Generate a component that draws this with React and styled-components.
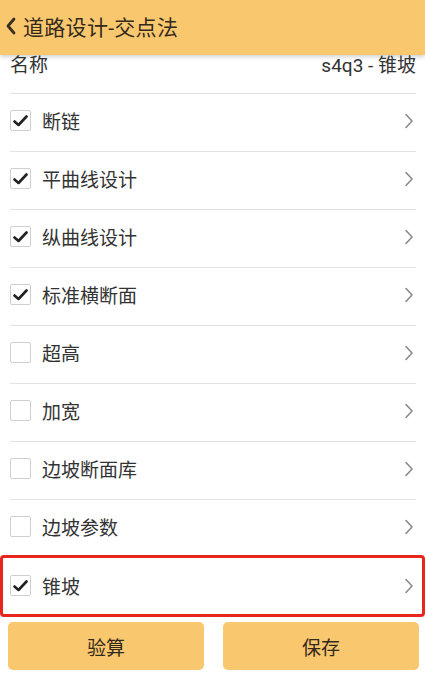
import React from "react";
import styled, { createGlobalStyle } from "styled-components";

const GlobalStyle = createGlobalStyle`
	html, body {
		margin: 0;
		padding: 0;
		background: #fff;
	}
	body {
		font-family: Roboto, "Noto Sans CJK SC", sans-serif;
		color: #333;
	}
`;

const items = [
	{ label: "断链", checked: true },
	{ label: "平曲线设计", checked: true },
	{ label: "纵曲线设计", checked: true },
	{ label: "标准横断面", checked: true },
	{ label: "超高", checked: false },
	{ label: "加宽", checked: false },
	{ label: "边坡断面库", checked: false },
	{ label: "边坡参数", checked: false },
	{ label: "锥坡", checked: true, highlight: true },
];

const BackIcon = () => (
	<svg width="12" height="18" viewBox="0 0 12 18">
		<path d="M9 2 L3 9 L9 16" fill="none" stroke="#3a2f20" strokeWidth="2.8" strokeLinecap="round" strokeLinejoin="round" />
	</svg>
);

const Chevron = () => (
	<svg width="10" height="16" viewBox="0 0 10 16">
		<path d="M2 1.5 L8 8 L2 14.5" fill="none" stroke="#8a8a8a" strokeWidth="1.6" strokeLinecap="round" strokeLinejoin="round" />
	</svg>
);

const CheckMark = () => (
	<svg width="15" height="12" viewBox="0 0 15 12">
		<path d="M1.5 6.5 L5.5 10 L13.5 1.5" fill="none" stroke="#222" strokeWidth="2.6" strokeLinecap="round" strokeLinejoin="round" />
	</svg>
);

const App = () => {
	return (
		<Page>
			<GlobalStyle />
			<Header>
				<BackIcon />
				<HeaderTitle>道路设计-交点法</HeaderTitle>
			</Header>
			<List>
				<NameRow>
					<NameInner>
						<span>名称</span>
						<span>s4q3 - 锥坡</span>
					</NameInner>
				</NameRow>
				{items.map((item) => (
					<Row key={item.label} $highlight={item.highlight}>
						<RowInner $last={item.highlight}>
							<Box>{item.checked && <CheckMark />}</Box>
							<Label>{item.label}</Label>
							<Chevron />
						</RowInner>
					</Row>
				))}
			</List>
			<Footer>
				<Button>验算</Button>
				<Button>保存</Button>
			</Footer>
		</Page>
	);
};

const Page = styled.div`
	width: 425px;
	height: 679px;
	display: flex;
	flex-direction: column;
	overflow: hidden;
	position: relative;
`;

const Header = styled.div`
	height: 55px;
	flex-shrink: 0;
	background-color: #f9c76e;
	display: flex;
	align-items: center;
	padding: 0 0 3px 5px;
	gap: 6px;
	box-shadow: 0 2px 4px rgba(0, 0, 0, 0.18);
	position: relative;
	z-index: 2;
	box-sizing: border-box;
`;

const HeaderTitle = styled.div`
	font-size: 21px;
	color: #33291c;
	letter-spacing: 0.3px;
`;

const List = styled.div`
	display: flex;
	flex-direction: column;
`;

const NameRow = styled.div`
	height: 39px;
	padding: 0 9px 0 10px;
`;

const NameInner = styled.div`
	height: 100%;
	display: flex;
	justify-content: space-between;
	align-items: flex-start;
	font-size: 19px;
	line-height: 20px;
	padding-top: 1px;
	border-bottom: 1px solid #e2e2e2;
	box-sizing: border-box;
`;

const Row = styled.div`
	height: 58px;
	padding: 0 9px 0 10px;
	box-sizing: border-box;
	${(p) =>
		p.$highlight &&
		`
		outline: 3px solid #e8261e;
		outline-offset: -3px;
		border-radius: 4px;
		margin-top: -3px;
		height: 62px;
		padding-top: 3px;
	`}
`;

const RowInner = styled.div`
	height: 100%;
	display: flex;
	align-items: center;
	border-bottom: ${(p) => (p.$last ? "none" : "1px solid #e2e2e2")};
	box-sizing: border-box;
	padding-right: 2px;
	padding-bottom: 4px;
`;

const Box = styled.div`
	width: 21px;
	height: 21px;
	box-sizing: border-box;
	border: 1px solid #cfcfcf;
	border-radius: 2px;
	display: flex;
	align-items: center;
	justify-content: center;
	flex-shrink: 0;
`;

const Label = styled.div`
	flex: 1;
	margin-left: 11px;
	font-size: 19px;
	color: #333;
`;

const Footer = styled.div`
	display: flex;
	gap: 19px;
	padding: 5px 6px 0 8px;
`;

const Button = styled.div`
	flex: 1;
	height: 48px;
	border-radius: 5px;
	background-color: #f9c76e;
	display: flex;
	align-items: center;
	justify-content: center;
	font-size: 19px;
	color: #33291c;
`;

export default App;
